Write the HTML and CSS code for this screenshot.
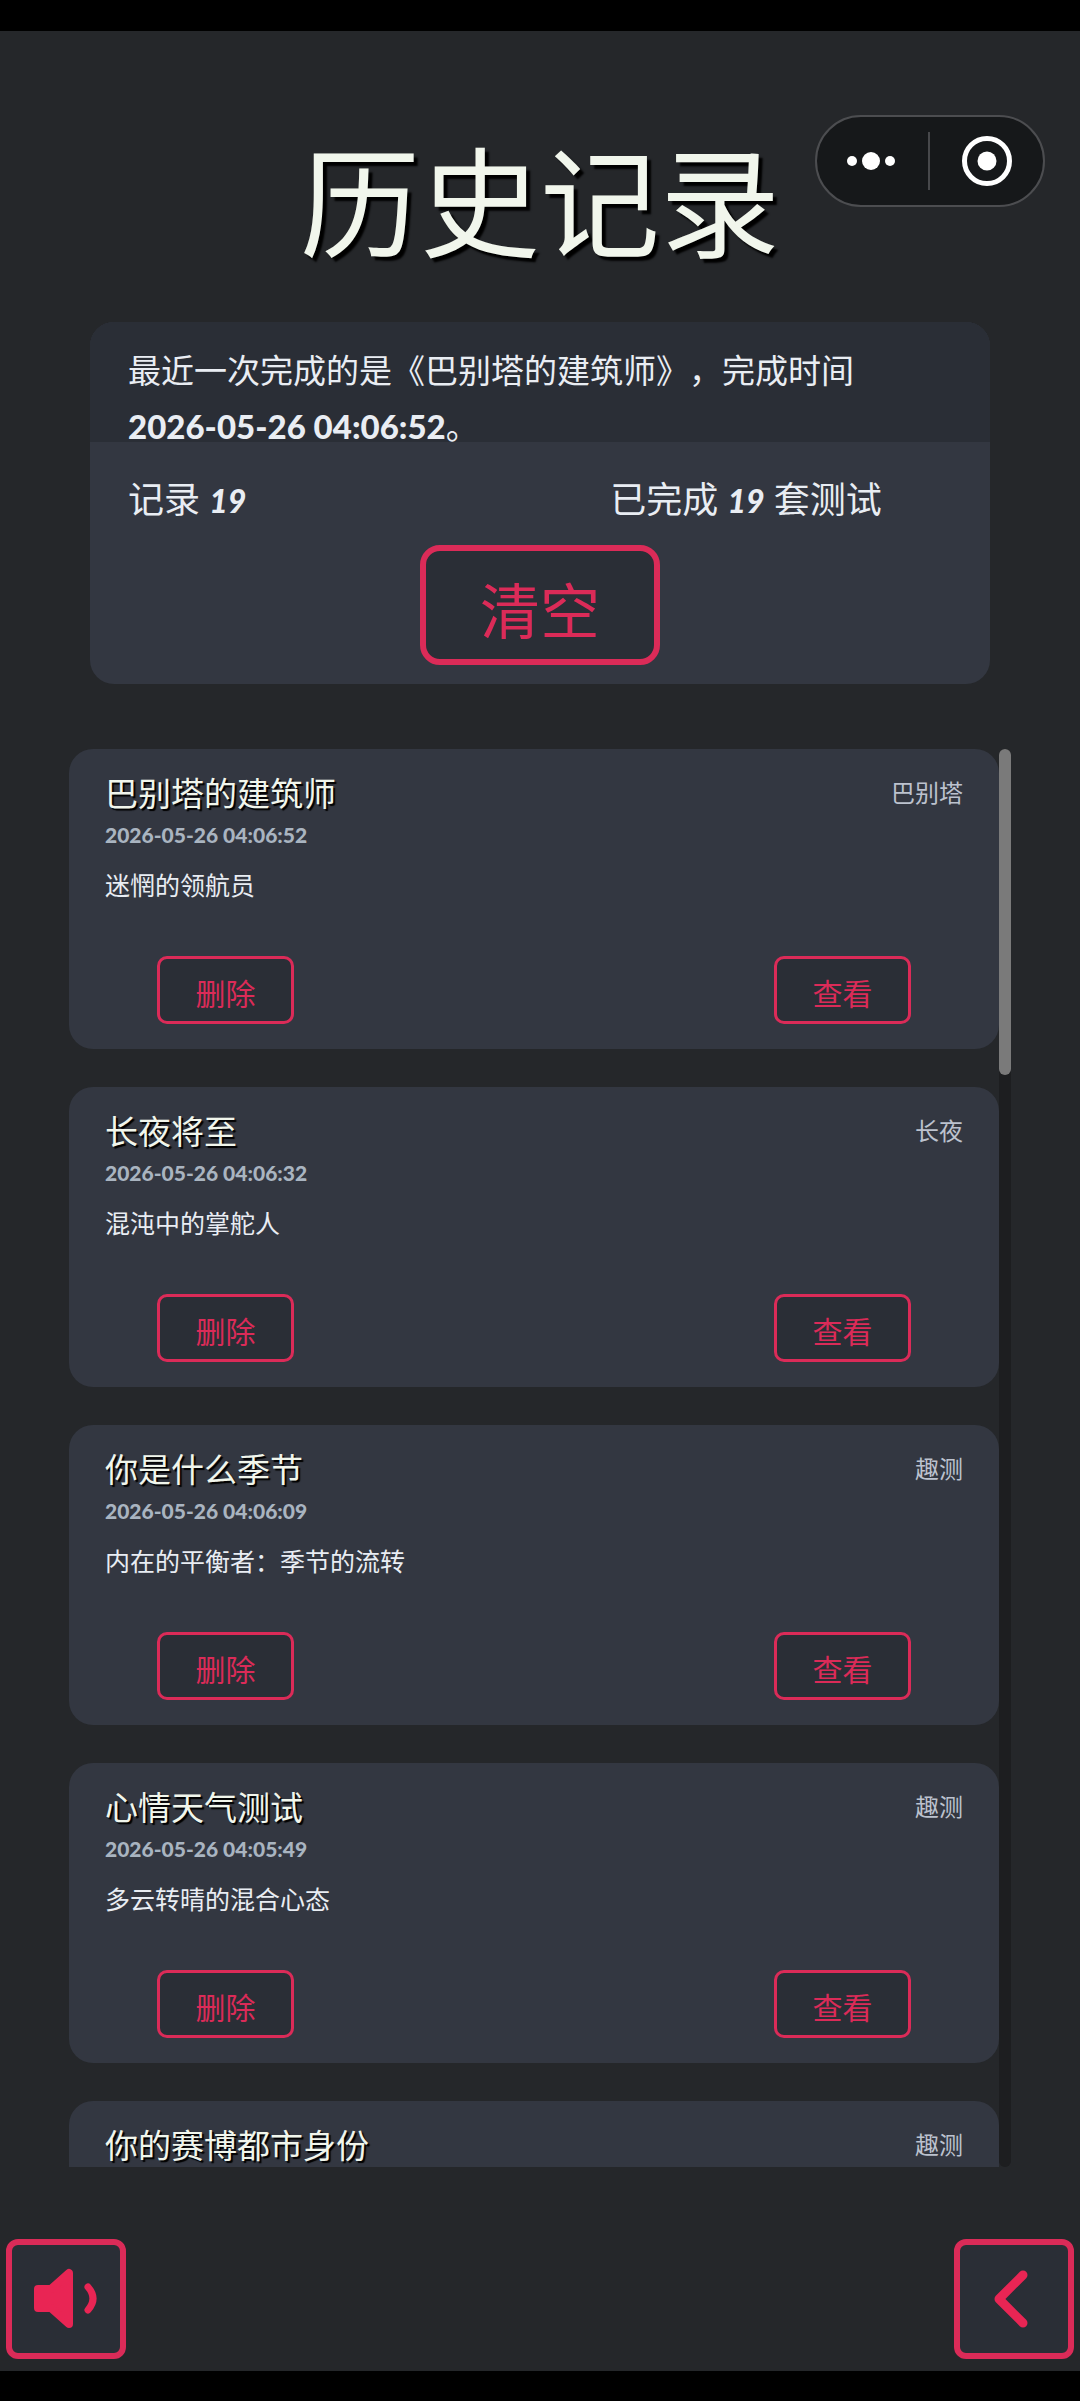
FILE: index.html
```html
<!DOCTYPE html>
<html lang="zh-CN">
<head>
  <meta charset="UTF-8">
  <meta name="viewport" content="width=device-width, initial-scale=1">
  <title>历史记录</title>
  <link rel="stylesheet" href="styles.css">
</head>
<body>
  <div class="screen">
    <header class="header">
      <h1>历史记录</h1>
      <div class="capsule">
        <button type="button" aria-label="更多">
          <svg width="60" height="60" viewBox="0 0 60 60" fill="#fff">
            <circle cx="11" cy="30" r="5"/>
            <circle cx="30" cy="30" r="9"/>
            <circle cx="49" cy="30" r="5"/>
          </svg>
        </button>
        <span class="capsule-line"></span>
        <button type="button" aria-label="关闭">
          <svg width="60" height="60" viewBox="0 0 60 60">
            <circle cx="30" cy="30" r="22.5" fill="none" stroke="#fff" stroke-width="5"/>
            <circle cx="30" cy="30" r="9.5" fill="#fff"/>
          </svg>
        </button>
      </div>
    </header>

    <section class="summary">
      <p class="summary-text">最近一次完成的是《巴别塔的建筑师》，完成时间 <time>2026-05-26 04:06:52</time>。</p>
      <div class="stats">
        <p>记录 <em>19</em></p>
        <p>已完成 <em>19</em> 套测试</p>
      </div>
      <button type="button" class="btn btn-clear">清空</button>
    </section>

    <main class="history">
      <div class="list">
        <article class="card">
          <div class="card-head">
            <h2>巴别塔的建筑师</h2>
            <span class="tag">巴别塔</span>
          </div>
          <time class="date">2026-05-26 04:06:52</time>
          <p class="result">迷惘的领航员</p>
          <div class="actions">
            <button type="button" class="btn btn-small">删除</button>
            <button type="button" class="btn btn-small">查看</button>
          </div>
        </article>

        <article class="card">
          <div class="card-head">
            <h2>长夜将至</h2>
            <span class="tag">长夜</span>
          </div>
          <time class="date">2026-05-26 04:06:32</time>
          <p class="result">混沌中的掌舵人</p>
          <div class="actions">
            <button type="button" class="btn btn-small">删除</button>
            <button type="button" class="btn btn-small">查看</button>
          </div>
        </article>

        <article class="card">
          <div class="card-head">
            <h2>你是什么季节</h2>
            <span class="tag">趣测</span>
          </div>
          <time class="date">2026-05-26 04:06:09</time>
          <p class="result">内在的平衡者：季节的流转</p>
          <div class="actions">
            <button type="button" class="btn btn-small">删除</button>
            <button type="button" class="btn btn-small">查看</button>
          </div>
        </article>

        <article class="card">
          <div class="card-head">
            <h2>心情天气测试</h2>
            <span class="tag">趣测</span>
          </div>
          <time class="date">2026-05-26 04:05:49</time>
          <p class="result">多云转晴的混合心态</p>
          <div class="actions">
            <button type="button" class="btn btn-small">删除</button>
            <button type="button" class="btn btn-small">查看</button>
          </div>
        </article>

        <article class="card">
          <div class="card-head">
            <h2>你的赛博都市身份</h2>
            <span class="tag">趣测</span>
          </div>
        </article>
      </div>
      <div class="scroll-track">
        <div class="scroll-thumb"></div>
      </div>
    </main>

    <footer class="footer">
      <button type="button" class="btn btn-icon" aria-label="声音">
        <svg width="108" height="108" viewBox="6 6 108 108">
          <path d="M32 50H45L63 34V85L45 69H32Z" fill="#e92554" stroke="#e92554" stroke-width="8" stroke-linejoin="round"/>
          <path d="M82 48Q92 59.5 82 71" fill="none" stroke="#e92554" stroke-width="7" stroke-linecap="round"/>
        </svg>
      </button>
      <button type="button" class="btn btn-icon" aria-label="返回">
        <svg width="108" height="108" viewBox="6 6 108 108">
          <path d="M69 36L45 60L69 84" fill="none" stroke="#e92554" stroke-width="9" stroke-linecap="round" stroke-linejoin="round"/>
        </svg>
      </button>
    </footer>
  </div>
</body>
</html>
```

FILE: styles.css
```css
:root {
  --bg: #25272a;
  --panel: #333741;
  --panel-dark: #2a2e36;
  --accent: #db2b58;
  --text: #e9edf3;
  --title: #f1f6ec;
}

* {
  box-sizing: border-box;
}

body {
  margin: 0;
  height: 100vh;
  padding: 31px 0 30px;
  background: #000;
  color: var(--text);
  font-family: Lato, "Noto Sans CJK SC", sans-serif;
  text-spacing-trim: space-all;
}

h1, h2, p {
  margin: 0;
  font-weight: 400;
}

button {
  font-family: inherit;
  cursor: pointer;
}

svg {
  display: block;
}

.screen {
  position: relative;
  display: flex;
  flex-direction: column;
  height: 100%;
  background: var(--bg);
}

.header {
  padding: 112px 0 59px;
  text-align: center;
}

h1 {
  color: var(--title);
  font-size: 120px;
  line-height: 120px;
  text-shadow: 4px 4px 2px #000;
}

/* mini program menu, floats over the title row */
.capsule {
  position: absolute;
  top: 84px;
  right: 35px;
  display: flex;
  align-items: center;
  justify-content: space-between;
  width: 230px;
  height: 92px;
  padding: 0 26px 0 24px;
  border: 2px solid #4c4d50;
  border-radius: 46px;
  background: #16181a;
}

.capsule button {
  padding: 0;
  border: none;
  background: none;
}

.capsule-line {
  width: 2px;
  height: 58px;
  background: #47484b;
}

.btn {
  border: 6px solid var(--accent);
  background: var(--panel-dark);
  color: var(--accent);
}

.summary {
  margin: 0 90px;
  padding-bottom: 19px;
  border-radius: 24px;
  background: var(--panel);
  overflow: hidden;
}

.summary-text {
  height: 120px;
  padding: 20px 38px 0;
  background: var(--panel-dark);
  font-size: 33px;
  line-height: 56px;
}

.summary-text time {
  font-weight: 900;
  white-space: nowrap;
}

.stats {
  display: grid;
  grid-template-columns: 1fr 1fr;
  padding: 29px 38px 16px;
  font-size: 36px;
  line-height: 56px;
}

.stats p:last-child {
  text-align: center;
}

.stats em {
  font-size: 32px;
  font-weight: 900;
}

.btn-clear {
  display: block;
  width: 240px;
  height: 120px;
  margin: 0 auto;
  padding: 12px 0 0;
  border-radius: 20px;
  font-size: 60px;
  line-height: 60px;
}

.history {
  display: flex;
  flex: 1;
  min-height: 0;
  margin: 65px 69px 0;
}

.list {
  display: flex;
  flex: 1;
  flex-direction: column;
  gap: 38px;
  overflow-y: auto;
  scrollbar-width: none;
}

.card {
  flex-shrink: 0;
  min-height: 300px;
  padding: 20px 36px 25px;
  border-radius: 24px;
  background: var(--panel);
}

.card-head {
  display: flex;
  justify-content: space-between;
  line-height: 48px;
}

.card-head h2 {
  color: var(--title);
  font-size: 33px;
  text-shadow: 2px 2px 1px #000;
}

.tag {
  color: #bcc2ce;
  font-size: 24px;
}

.date {
  display: block;
  margin-top: 4px;
  color: #a9b4c0;
  font-size: 21px;
  font-weight: 900;
  line-height: 28px;
}

.result {
  margin-top: 18px;
  font-size: 25px;
  line-height: 36px;
}

.actions {
  display: flex;
  justify-content: space-between;
  margin-top: 53px;
  padding: 0 52px;
}

.btn-small {
  width: 137px;
  height: 68px;
  padding: 6px 0 0;
  border-width: 3px;
  border-radius: 10px;
  font-size: 30px;
  line-height: 30px;
}

.scroll-track {
  width: 12px;
  border-radius: 6px;
  background: #1d1e20;
}

.scroll-thumb {
  height: 23%;
  border-radius: 6px;
  background: #7a7a7a;
}

.footer {
  display: flex;
  justify-content: space-between;
  padding: 72px 6px 12px;
}

.btn-icon {
  width: 120px;
  height: 120px;
  padding: 0;
  border-radius: 12px;
}
```
